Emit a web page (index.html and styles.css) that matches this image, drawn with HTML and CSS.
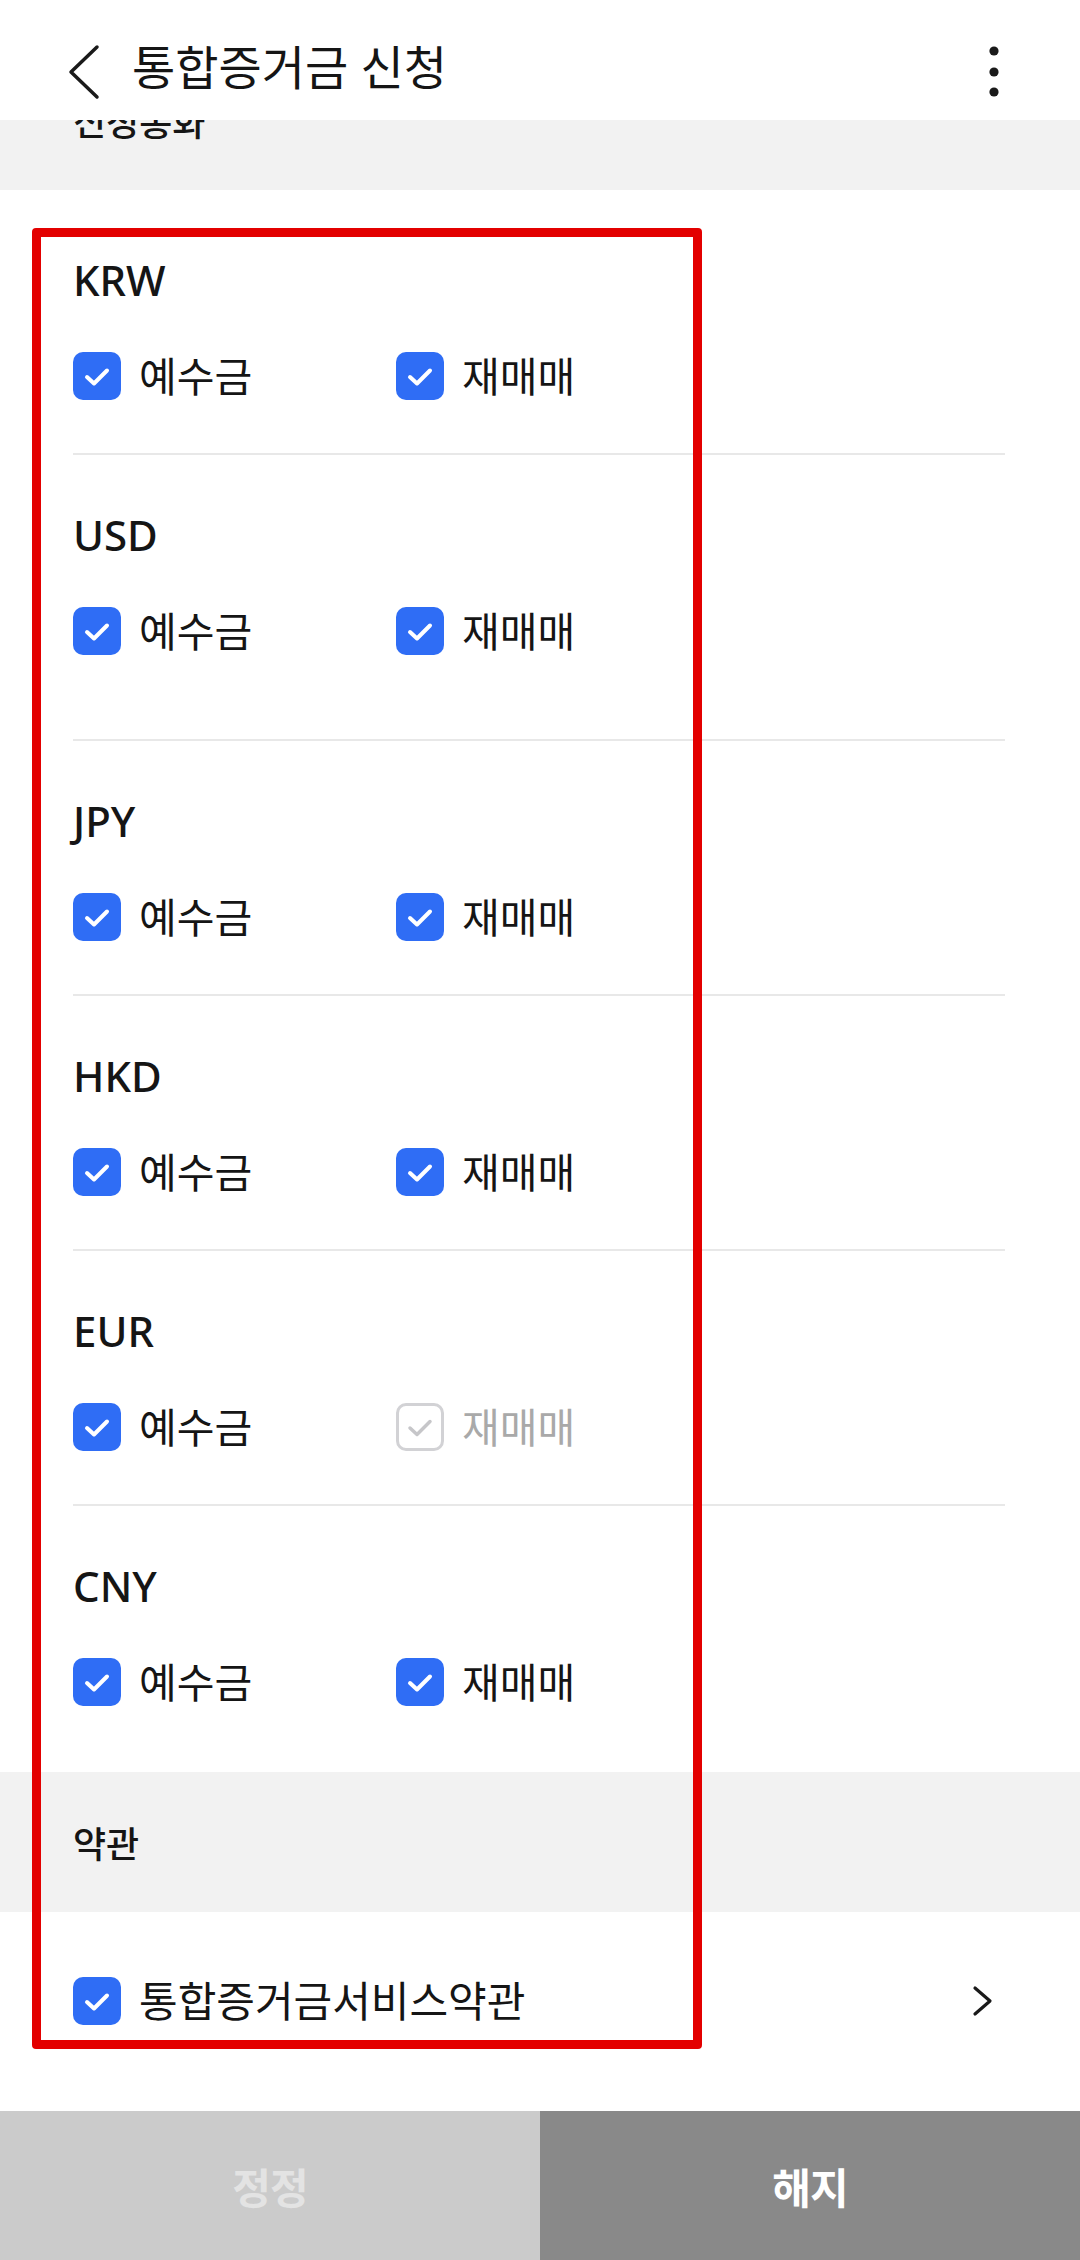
FILE: index.html
```html
<!DOCTYPE html>
<html lang="ko">
<head>
    <meta charset="UTF-8">
    <meta name="viewport" content="width=device-width, initial-scale=1.0">
    <title>통합증거금 신청</title>
    <link rel="stylesheet" href="styles.css">
</head>
<body>
    <header class="appbar">
        <svg class="back" width="40" height="70" viewBox="0 0 40 70">
            <polyline points="37,15 11,40 37,65" fill="none" stroke="#1a1a1a" stroke-width="3.5" stroke-linecap="round" stroke-linejoin="round"/>
        </svg>
        <h1 class="title">통합증거금 신청</h1>
        <svg class="more" width="20" height="70" viewBox="0 0 20 70">
            <circle cx="10" cy="19" r="4.6" fill="#1a1a1a"/>
            <circle cx="10" cy="40" r="4.6" fill="#1a1a1a"/>
            <circle cx="10" cy="60" r="4.6" fill="#1a1a1a"/>
        </svg>
    </header>

    <main class="content">
        <div class="group-head">신청통화</div>

        <div class="currency-list">
            <section class="currency">
                <div class="code">KRW</div>
                <div class="options">
                    <label class="option"><span class="check on"></span>예수금</label>
                    <label class="option"><span class="check on"></span>재매매</label>
                </div>
            </section>
            <section class="currency tall">
                <div class="code">USD</div>
                <div class="options">
                    <label class="option"><span class="check on"></span>예수금</label>
                    <label class="option"><span class="check on"></span>재매매</label>
                </div>
            </section>
            <section class="currency">
                <div class="code">JPY</div>
                <div class="options">
                    <label class="option"><span class="check on"></span>예수금</label>
                    <label class="option"><span class="check on"></span>재매매</label>
                </div>
            </section>
            <section class="currency">
                <div class="code">HKD</div>
                <div class="options">
                    <label class="option"><span class="check on"></span>예수금</label>
                    <label class="option"><span class="check on"></span>재매매</label>
                </div>
            </section>
            <section class="currency">
                <div class="code">EUR</div>
                <div class="options">
                    <label class="option"><span class="check on"></span>예수금</label>
                    <label class="option disabled"><span class="check off"></span>재매매</label>
                </div>
            </section>
            <section class="currency last">
                <div class="code">CNY</div>
                <div class="options">
                    <label class="option"><span class="check on"></span>예수금</label>
                    <label class="option"><span class="check on"></span>재매매</label>
                </div>
            </section>
        </div>

        <div class="group-head">약관</div>

        <div class="terms">
            <label class="option"><span class="check on"></span>통합증거금서비스약관</label>
            <svg class="arrow" width="24" height="36" viewBox="0 0 24 36">
                <polyline points="5,4 20,17 5,30" fill="none" stroke="#1a1a1a" stroke-width="3.2" stroke-linecap="round" stroke-linejoin="round"/>
            </svg>
        </div>

        <div class="actions">
            <button class="btn edit" type="button">정정</button>
            <button class="btn cancel" type="button">해지</button>
        </div>
    </main>

    <div class="highlight"></div>
</body>
</html>
```

FILE: styles.css
```css
body {
    margin: 0;
    font-family: "Noto Sans", "Noto Sans CJK KR", sans-serif;
    color: #151515;
    background: #fff;
    overflow: hidden;
}
.appbar {
    position: fixed;
    top: 0;
    left: 0;
    right: 0;
    height: 120px;
    box-sizing: border-box;
    padding: 14px 76px 0 60px;
    display: flex;
    align-items: center;
    background: #fff;
    z-index: 2;
}
.title {
    flex: 1;
    margin: 0 0 0 32px;
    font-size: 47px;
    font-weight: 400;
    line-height: 60px;
}
.content {
    padding-top: 50px;
}
.group-head {
    height: 140px;
    display: flex;
    align-items: center;
    padding-left: 73px;
    background: #f2f2f2;
    font-size: 36px;
    font-weight: 500;
}
.currency-list {
    padding-top: 10px;
}
.currency {
    margin: 0 75px 0 73px;
    padding: 55px 0 53px;
    border-bottom: 2px solid #e8e8e8;
}
.currency.tall {
    padding-bottom: 84px;
}
.currency.last {
    padding-bottom: 66px;
    border-bottom: none;
}
.code {
    font-size: 42px;
    font-weight: 500;
    line-height: 50px;
}
.options {
    display: flex;
    margin-top: 47px;
    height: 48px;
}
.option {
    width: 323px;
    display: flex;
    align-items: center;
    gap: 18px;
    font-size: 41px;
    line-height: 48px;
}
.option.disabled {
    color: #a9a9a9;
}
.check {
    width: 48px;
    height: 48px;
    flex-shrink: 0;
    box-sizing: border-box;
    border-radius: 10px;
    background-repeat: no-repeat;
    background-position: center;
}
.check.on {
    background-color: #2f6df5;
    background-image: url("data:image/svg+xml,%3Csvg xmlns='http://www.w3.org/2000/svg' width='48' height='48' viewBox='0 0 48 48'%3E%3Cpolyline points='14,25 21,31.5 34,18.5' fill='none' stroke='white' stroke-width='4' stroke-linecap='round' stroke-linejoin='round'/%3E%3C/svg%3E");
}
.check.off {
    border: 3px solid #d2d2d5;
    background-color: #fff;
    background-image: url("data:image/svg+xml,%3Csvg xmlns='http://www.w3.org/2000/svg' width='42' height='42' viewBox='0 0 42 42'%3E%3Cpolyline points='11,22 18,28.5 31,15.5' fill='none' stroke='%23c6c6c9' stroke-width='3.5' stroke-linecap='round' stroke-linejoin='round'/%3E%3C/svg%3E");
}
.terms {
    height: 199px;
    box-sizing: border-box;
    padding: 65px 86px 0 73px;
    display: flex;
    align-items: flex-start;
    justify-content: space-between;
}
.terms .option {
    width: auto;
    font-size: 42px;
}
.arrow {
    margin-top: 7px;
}
.actions {
    display: flex;
    height: 149px;
}
.btn {
    flex: 1;
    border: none;
    font-family: inherit;
    font-size: 42px;
    font-weight: 700;
    letter-spacing: -1px;
}
.btn.edit {
    background: #cbcbcb;
    color: #e3e3e3;
}
.btn.cancel {
    background: #898989;
    color: #fff;
}
.highlight {
    position: absolute;
    left: 32px;
    top: 228px;
    width: 670px;
    height: 1821px;
    box-sizing: border-box;
    border: 9px solid #e30000;
    border-radius: 4px;
    pointer-events: none;
}
```
